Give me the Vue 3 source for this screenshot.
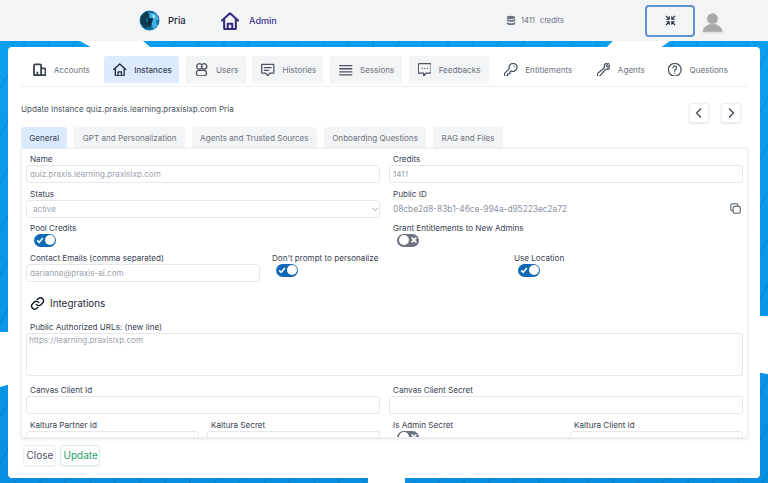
<script setup>
const icons = {
  accounts: 'M5 4h7.500A1.500 1.500 0 0 1 14 5.500V20H3.500V5.500A1.500 1.500 0 0 1 5 4z M14 10h4.500a2 2 0 0 1 2 2v8H14 M8.500 20v-4',
  home: 'M3 11.500 12 3.500l9 8 M5.500 9.500V20a1 1 0 0 0 1 1h11a1 1 0 0 0 1-1V9.500 M9.500 21v-6h5v6',
  users: 'M8.500 3a4 4 0 1 0 0 8 4 4 0 0 0 0-8z M15.500 3a4 4 0 1 0 0 8 4 4 0 0 0 0-8z M8 13h7a4 4 0 0 1 0 8H8a4 4 0 0 1 0-8z',
  hist: 'M4 4h16a1 1 0 0 1 1 1v11a1 1 0 0 1-1 1h-5l-3 4-3-4H4a1 1 0 0 1-1-1V5a1 1 0 0 1 1-1z M7 9h10 M7 13h6',
  sess: 'M3 6h18 M3 10.500h18 M3 15h18 M3 19.500h18',
  feed: 'M4 3h16a1.500 1.500 0 0 1 1.500 1.500v11A1.500 1.500 0 0 1 20 17h-6l-3.500 4.500V17H4a1.500 1.500 0 0 1-1.500-1.500v-11A1.500 1.500 0 0 1 4 3z M8 10h.01 M12 10h.01 M16 10h.01',
  key: 'M15.500 2.500a6 6 0 0 0-5.700 7.900L2.500 17.700v3.800h3.800l1-1V18h2.500l1.500-1.500v-2l.9-.9a6 6 0 1 0 3.300-11.100z M17 7h.01',
  wrench: 'M21.750 6.750a4.500 4.500 0 0 1-4.884 4.484c-1.076-.091-2.264.071-2.950.904l-7.152 8.684a2.548 2.548 0 1 1-3.586-3.586l8.684-7.152c.833-.686.995-1.874.904-2.950a4.500 4.500 0 0 1 6.336-4.486l-3.276 3.276a3.004 3.004 0 0 0 2.250 2.250l3.276-3.276c.256.565.398 1.192.398 1.852z',
  help: 'M12 2.500a9.500 9.500 0 1 0 0 19 9.500 9.500 0 0 0 0-19z M9.300 9.200a2.700 2.700 0 1 1 4.100 2.300c-.9.5-1.400 1.100-1.400 2v.4 M12 17.200h.01',
}
const tabs = [
  { label: 'Accounts', icon: icons.accounts, kind: 'plain', w: 74 },
  { label: 'Instances', icon: icons.home, kind: 'active', w: 75 },
  { label: 'Users', icon: icons.users, kind: 'soft', w: 60 },
  { label: 'Histories', icon: icons.hist, kind: 'soft', w: 71 },
  { label: 'Sessions', icon: icons.sess, kind: 'soft', w: 72 },
  { label: 'Feedbacks', icon: icons.feed, kind: 'soft', w: 80 },
  { label: 'Entitlements', icon: icons.key, kind: 'plain', w: 86 },
  { label: 'Agents', icon: icons.wrench, kind: 'plain', w: 65 },
  { label: 'Questions', icon: icons.help, kind: 'plain', w: 76 },
]
const subTabs = [
  { label: 'General', active: true },
  { label: 'GPT and Personalization' },
  { label: 'Agents and Trusted Sources' },
  { label: 'Onboarding Questions' },
  { label: 'RAG and Files' },
]
</script>

<template>
  <div class="page">
    <header class="top">
      <div class="brand">
        <svg class="logo" viewBox="0 0 22 22">
          <circle cx="11" cy="11" r="10.500" fill="#0f6f9e" />
          <path d="M2 7 8 1l3 5-4 5 3 4-3 5-5-6z" fill="#12384f" />
          <path d="M11 3l7 1 3 6-3 1 1 6-4 3-2-6 2-4-4-2z" fill="#3fb3e2" />
          <path d="M10 8l5 1-2 5-2 5-2-5z" fill="#0c2b3e" />
          <path d="M14 4l3 3-2 2z" fill="#dff3fb" />
        </svg>
        <span>Pria</span>
      </div>
      <div class="admin">
        <svg viewBox="2 2 20 20" class="admin-icon"><path :d="icons.home" /></svg>
        <span>Admin</span>
      </div>
      <div class="credits">
        <svg viewBox="0 0 12 12" class="db">
          <ellipse cx="6" cy="2.400" rx="5" ry="2" />
          <path d="M1 4v1.600c0 1.100 2.200 2 5 2s5-.9 5-2V4c-1 1-3 1.500-5 1.500S2 5 1 4z" />
          <path d="M1 7.800v1.800c0 1.100 2.200 2 5 2s5-.9 5-2V7.800c-1 1-3 1.500-5 1.500s-4-.5-5-1.500z" />
        </svg>
        <span>1411</span><span class="credits-word">credits</span>
      </div>
      <button class="shrink" type="button" aria-label="Collapse">
        <svg viewBox="0 0 12 12">
          <path d="M1 1l3 3M4.600 1.400v3.200H1.400M11 1L8 4M7.400 1.400v3.200h3.200M1 11l3-3M4.600 10.600V7.400H1.400M11 11L8 8M7.400 10.600V7.400h3.200" />
        </svg>
      </button>
      <svg class="avatar" viewBox="0 0 24 24">
        <circle cx="12" cy="8" r="6" />
        <path d="M1 23c0-4.500 3.500-7 7.500-8.500h7c4 1.500 7.500 4 7.500 8.500z" />
      </svg>
    </header>

    <main class="stage">
      <i class="cut cut-a"></i><i class="cut cut-b"></i><i class="cut cut-l"></i><i class="cut cut-r"></i><i class="cut cut-bot"></i>
      <section class="card">
        <nav class="tabs">
          <a v-for="t in tabs" :key="t.label" class="tab" :class="t.kind" :style="{ width: t.w + 'px' }">
            <svg viewBox="2 2 20 20"><path :d="t.icon" /></svg>
            <span>{{ t.label }}</span>
          </a>
        </nav>
        <div class="title-row">
          <p>Update Instance quiz.praxis.learning.praxislxp.com Pria</p>
          <div class="pager">
            <button type="button" aria-label="Previous"><svg viewBox="0 0 12 12"><path d="M8 1.500 3.500 6 8 10.500" /></svg></button>
            <button type="button" aria-label="Next"><svg viewBox="0 0 12 12"><path d="M4 1.500 8.500 6 4 10.500" /></svg></button>
          </div>
        </div>
        <div class="subtabs">
          <a v-for="s in subTabs" :key="s.label" :class="{ on: s.active }">{{ s.label }}</a>
        </div>
        <div class="panel">
          <div class="grid two">
            <div class="col">
              <label>Name</label>
              <input class="field" readonly value="quiz.praxis.learning.praxislxp.com" />
              <label>Status</label>
              <div class="select-wrap">
                <select class="field sel"><option>active</option></select>
                <svg viewBox="0 0 10 10"><path d="M2.500 4 5 6.500 7.500 4" /></svg>
              </div>
              <label>Pool Credits</label>
              <span class="toggle on"><svg viewBox="0 0 10 10"><path d="M1.500 5.500 4 8l4.500-5.500" /></svg><b></b></span>
            </div>
            <div class="col">
              <label>Credits</label>
              <input class="field" readonly value="1411" />
              <label>Public ID</label>
              <div class="pid">
                <span>08cbe2d8-83b1-46ce-994a-d95223ec2a72</span>
                <svg viewBox="0 0 14 14"><rect x="1" y="1" width="9" height="9" rx="2" /><rect x="4" y="4" width="9" height="9" rx="2" fill="#fff" /></svg>
              </div>
              <label>Grant Entitlements to New Admins</label>
              <span class="toggle off"><b></b><svg viewBox="0 0 10 10"><path d="M2 2l6 6M8 2l-6 6" /></svg></span>
            </div>
          </div>
          <div class="grid contact">
            <div>
              <label>Contact Emails (comma separated)</label>
              <input class="field" readonly value="darianne@praxis-ai.com" />
            </div>
            <div>
              <label>Don't prompt to personalize</label>
              <span class="toggle on"><svg viewBox="0 0 10 10"><path d="M1.500 5.500 4 8l4.500-5.500" /></svg><b></b></span>
            </div>
            <div>
              <label>Use Location</label>
              <span class="toggle on"><svg viewBox="0 0 10 10"><path d="M1.500 5.500 4 8l4.500-5.500" /></svg><b></b></span>
            </div>
          </div>
          <h3 class="integrations">
            <svg viewBox="0 0 24 24"><path d="M10 13.500a5 5 0 0 0 7.500.5l3-3a5 5 0 0 0-7-7l-1.700 1.700 M14 10.500a5 5 0 0 0-7.500-.5l-3 3a5 5 0 0 0 7 7l1.700-1.700" /></svg>
            Integrations
          </h3>
          <label>Public Authorized URLs: (new line)</label>
          <textarea class="field area" readonly>https://learning.praxislxp.com</textarea>
          <div class="grid two canvas">
            <div><label>Canvas Client Id</label><input class="field" readonly /></div>
            <div><label>Canvas Client Secret</label><input class="field" readonly /></div>
          </div>
          <div class="grid two">
            <div class="grid pair">
              <div><label>Kaltura Partner Id</label><input class="field" readonly /></div>
              <div><label>Kaltura Secret</label><input class="field" readonly /></div>
            </div>
            <div class="grid pair">
              <div><label>Is Admin Secret</label><span class="toggle off"><b></b><svg viewBox="0 0 10 10"><path d="M2 2l6 6M8 2l-6 6" /></svg></span></div>
              <div><label>Kaltura Client Id</label><input class="field" readonly /></div>
            </div>
          </div>
        </div>
        <footer class="actions">
          <button type="button" class="close">Close</button>
          <button type="button" class="update">Update</button>
        </footer>
      </section>
    </main>
  </div>
</template>

<style>
html, body { margin: 0; background: #fff; }
</style>

<style scoped>
.page {
  width: 768px;
  height: 483px;
  overflow: hidden;
  font-family: Inter, "Liberation Sans", sans-serif;
  font-size: 8.100px;
  color: #374151;
  background: #fff;
}
.top {
  height: 41px;
  background: #f3f4f6;
  display: flex;
  align-items: center;
  box-sizing: border-box;
  padding-left: 139px;
}
.brand { display: flex; align-items: center; gap: 8px; width: 82px; font-size: 9.500px; font-weight: 500; color: #1f2937; }
.logo { width: 21px; height: 21px; border-radius: 50%; }
.admin { display: flex; align-items: center; gap: 10px; width: 285px; font-size: 9.100px; font-weight: 500; color: #3b3391; }
.admin-icon { width: 18px; height: 18px; fill: none; stroke: #312e81; stroke-width: 2.300; stroke-linejoin: round; stroke-linecap: round; }
.credits { display: flex; align-items: center; gap: 5px; width: 139px; font-size: 7.500px; color: #6b7280; }
.credits-word { margin-left: 0; }
.db { width: 10px; height: 11px; fill: #6b7280; }
.shrink {
  width: 50px; height: 32px; padding: 0;
  background: transparent;
  border: 2px solid #5f93d0;
  border-radius: 4px;
  display: flex; align-items: center; justify-content: center;
}
.shrink svg { width: 11px; height: 11px; fill: none; stroke: #1f2937; stroke-width: 1.200; }
.avatar { width: 21px; height: 22px; margin-left: 7px; margin-top: 2px; fill: #a8a8a8; filter: drop-shadow(0 1px 1px rgba(0,0,0,.15)); }

.stage {
  position: relative;
  height: 442px;
  box-sizing: border-box;
  padding: 6px 8px 5px;
  background-color: #0d9ee9;
  background-image:
    repeating-linear-gradient(118deg, rgba(5,70,150,.16) 0 1.500px, transparent 1.500px 22px),
    linear-gradient(180deg, #0c9ff0, #0a8fe0);
}
.cut { position: absolute; background: #fff; display: block; }
.cut-a { left: 80px; top: 0; width: 70px; height: 6px; clip-path: polygon(0 0, 90% 0, 100% 100%, 15% 100%); }
.cut-b { left: 605px; top: 0; width: 65px; height: 6px; clip-path: polygon(12% 0, 100% 0, 87% 100%, 3% 100%); }
.cut-l { left: 0; top: 291px; width: 8px; height: 55px; clip-path: polygon(0 0, 100% 0, 100% 96%, 0 100%); }
.cut-r { right: 0; top: 275px; width: 8px; height: 58px; clip-path: polygon(0 0, 100% 0, 100% 100%, 0 98%); }
.cut-bot { left: 368px; bottom: 0; width: 37px; height: 5px; }

.card {
  position: relative;
  height: 431px;
  box-sizing: border-box;
  background: #fff;
  border-radius: 4px;
  padding: 9px 12px 0 13px;
  display: flex;
  flex-direction: column;
}
.tabs {
  display: flex;
  height: 27px;
  padding: 0 0 3px 2.700px;
  gap: 6.600px;
  border-bottom: 1.500px solid #eceef1;
  box-sizing: content-box;
}
.tab {
  display: flex;
  align-items: center;
  gap: 7.500px;
  padding-left: 9px;
  box-sizing: border-box;
  border-radius: 3px 3px 0 0;
  color: #6b7280;
  white-space: nowrap;
}
.tab svg { width: 13.500px; height: 13.500px; flex: none; fill: none; stroke: #4b5563; stroke-width: 1.900; stroke-linejoin: round; stroke-linecap: round; }
.tab.soft { background: #f3f4f6; }
.tab.active { background: #dbeafe; color: #374151; font-weight: 500; }
.tab.active svg { stroke: #1f2937; }
.tab:first-child svg { stroke: #374151; stroke-width: 2.600; }

.title-row {
  height: 39.500px;
  display: flex;
  align-items: flex-start;
  justify-content: space-between;
  box-sizing: border-box;
  padding: 16px 7px 0 0;
}
.title-row p { margin: 0; line-height: 12px; color: #4b5563; font-size: 8.100px; }
.pager { display: flex; gap: 12px; }
.pager button {
  width: 20px; height: 20px; padding: 0;
  background: #fff;
  border: 1px solid #eceef1;
  border-radius: 3px;
  box-shadow: 0 1px 2px rgba(0,0,0,.1);
  display: flex; align-items: center; justify-content: center;
}
.pager svg { width: 12px; height: 12px; fill: none; stroke: #374151; stroke-width: 1.200; }

.subtabs { display: flex; gap: 7px; height: 21px; }
.subtabs a {
  padding: 1px 8.300px 0;
  line-height: 20px;
  background: #f3f4f6;
  color: #6b7280;
  border-radius: 3px 3px 0 0;
  white-space: nowrap;
}
.subtabs a.on { background: #dbeafe; color: #374151; }

.panel {
  height: 290px;
  flex: none;
  box-sizing: border-box;
  overflow: hidden;
  padding: 4px 4px 0;
  border: 1px solid #f0f1f3;
  box-shadow: 0 1px 3px rgba(0,0,0,.12);
  background: #fff;
}
label {
  display: block;
  height: 12px;
  line-height: 12px;
  padding-left: 4px;
  color: #374151;
  white-space: nowrap;
}
.field {
  display: block;
  width: 100%;
  height: 18px;
  box-sizing: border-box;
  margin: 0 0 5px;
  padding: 0 3px;
  border: 1px solid #e5e7eb;
  border-radius: 3px;
  font: inherit;
  color: #9ca3af;
  background: #fff;
  outline: none;
}
.grid { display: grid; }
.two { grid-template-columns: 354px 354px; column-gap: 9px; }
.pair { grid-template-columns: 173px 173px; column-gap: 8px; }
.select-wrap { position: relative; height: 22px; }
.sel { appearance: none; padding-left: 6px; height: 18px; }
.select-wrap svg { position: absolute; right: 0; top: 4px; width: 10px; height: 10px; fill: none; stroke: #9ca3af; stroke-width: 1; }
.pid { display: flex; align-items: center; justify-content: space-between; height: 18px; margin-bottom: 4px; padding: 0 2px 0 4px; color: #8b93a0; font-size: 8.300px; }
.pid svg { width: 11px; height: 11px; fill: none; stroke: #4b5563; stroke-width: 1.300; }
.toggle {
  display: flex;
  align-items: center;
  justify-content: space-between;
  width: 22px;
  height: 13px;
  box-sizing: border-box;
  margin-left: 8px;
  padding: 0 1.500px;
  border-radius: 7px;
}
.toggle b { width: 10px; height: 10px; border-radius: 50%; background: #fff; flex: none; }
.toggle svg { width: 8px; height: 8px; fill: none; stroke: #fff; stroke-width: 2; flex: none; }
.toggle.on { background: #0f69b4; }
.toggle.off { background: #6b7280; }
.contact { grid-template-columns: 234px 242px 230px; column-gap: 0; margin-top: 5px; }
.contact > div:nth-child(2), .contact > div:nth-child(3) { padding-left: 8px; }
.integrations {
  display: flex;
  align-items: center;
  gap: 5px;
  margin: 7px 0 0 4px;
  height: 19px;
  font-size: 9.900px;
  font-weight: 400;
  color: #1f2937;
}
.integrations svg { width: 15px; height: 15px; fill: none; stroke: #111827; stroke-width: 2.300; stroke-linecap: round; }
.integrations + label { margin-top: 8px; }
.area { height: 43px; resize: none; padding: 1px 2px; margin-bottom: 8px; }

.actions { display: flex; gap: 4px; padding: 7px 0 0 2px; }
.actions button {
  height: 21px;
  padding: 0 2.500px;
  font: inherit;
  font-size: 10px;
  background: #fff;
  border: 1px solid #eceef1;
  border-radius: 3px;
  box-shadow: 0 1px 1px rgba(0,0,0,.06);
}
.close { color: #4b5563; width: 33px; }
.actions .update { color: #1f9d6d; width: 40px; border-color: #d5efe4; }
</style>
